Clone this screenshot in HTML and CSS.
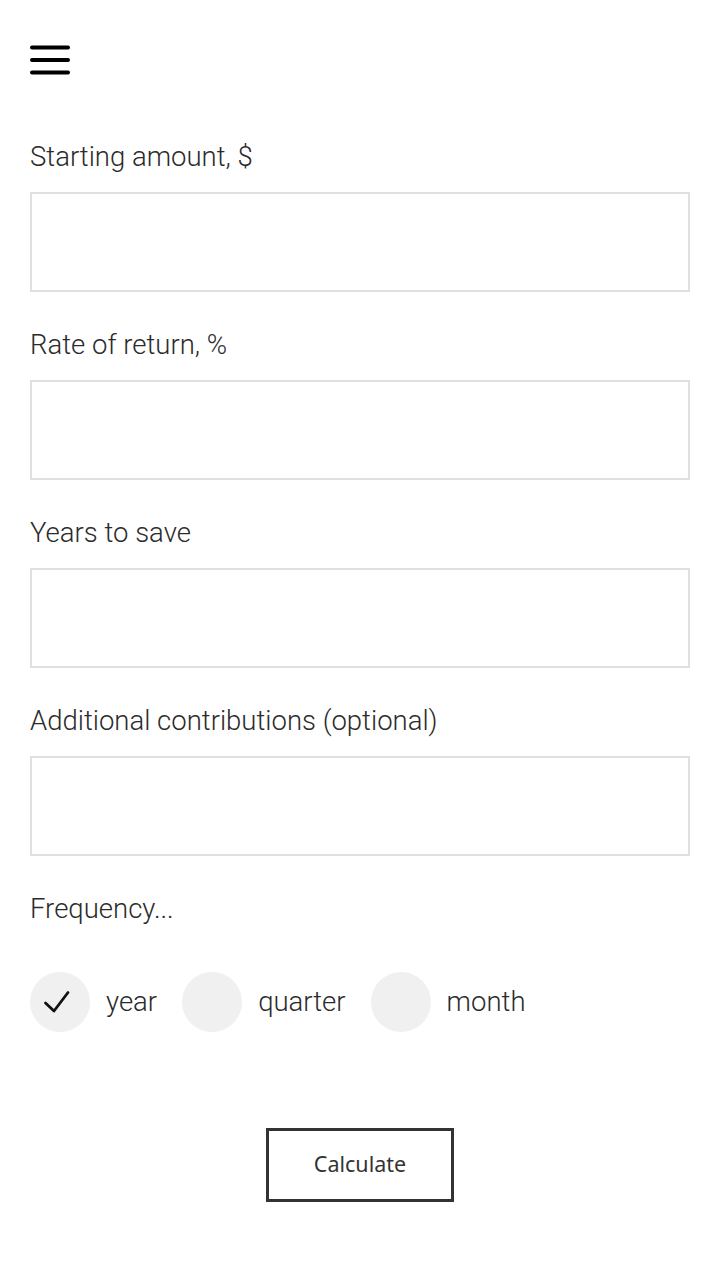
FILE: index.html
```html
<!DOCTYPE html>
<html lang="en">
<head>
<meta charset="utf-8">
<title>Savings calculator</title>
<link rel="stylesheet" href="styles.css">
</head>
<body>
<header class="top">
  <svg class="menu" width="40" height="32" viewBox="0 0 40 32" aria-label="Menu">
    <path d="M2 3.5H38M2 16H38M2 28.5H38" stroke="#000" stroke-width="4" stroke-linecap="round" fill="none"/>
  </svg>
</header>
<main class="form">
  <div class="field">
    <label class="label">Starting amount, $</label>
    <div class="input"></div>
  </div>
  <div class="field">
    <label class="label">Rate of return, %</label>
    <div class="input"></div>
  </div>
  <div class="field">
    <label class="label">Years to save</label>
    <div class="input"></div>
  </div>
  <div class="field">
    <label class="label">Additional contributions (optional)</label>
    <div class="input"></div>
  </div>
  <div class="label freq">Frequency...</div>
  <div class="radios">
    <div class="radio">
      <span class="dot">
        <svg width="60" height="60" viewBox="0 0 60 60"><path d="M15.5 31 L24 39 L38 20.5" stroke="#111" stroke-width="2.8" fill="none" stroke-linecap="round" stroke-linejoin="round"/></svg>
      </span>
      <span class="rlabel">year</span>
    </div>
    <div class="radio">
      <span class="dot"></span>
      <span class="rlabel">quarter</span>
    </div>
    <div class="radio">
      <span class="dot"></span>
      <span class="rlabel">month</span>
    </div>
  </div>
  <div class="actions">
    <button class="btn">Calculate</button>
  </div>
</main>
</body>
</html>
```

FILE: styles.css
```css
html, body {
  margin: 0;
  padding: 0;
  background: #fff;
}
body {
  padding: 0 30px;
  font-family: Roboto, "Liberation Sans", sans-serif;
  font-weight: 300;
  color: #333;
}
.top {
  padding-top: 44px;
  height: 32px;
  margin-bottom: 62px;
}
.menu {
  display: block;
}
.form {
  display: flex;
  flex-direction: column;
}
.field {
  display: flex;
  flex-direction: column;
  margin-bottom: 34px;
}
.label {
  display: block;
  font-size: 27.5px;
  line-height: 38px;
  height: 36px;
  color: #2b2b2b;
}
.input {
  margin-top: 18px;
  height: 96px;
  border: 2px solid #e0e0e0;
}
.freq {
  margin-bottom: 46px;
}
.radios {
  display: flex;
  align-items: center;
  gap: 25px;
}
.radio {
  display: flex;
  align-items: center;
  gap: 16px;
}
.dot {
  width: 60px;
  height: 60px;
  border-radius: 50%;
  background: #f0f0f0;
  display: block;
}
.dot svg {
  display: block;
}
.rlabel {
  font-size: 27.5px;
  line-height: 38px;
  color: #2b2b2b;
}
.actions {
  display: flex;
  justify-content: center;
  margin-top: 96px;
}
.btn {
  width: 188px;
  height: 74px;
  border: 3px solid #333;
  background: #fff;
  font-family: "Noto Sans", "Open Sans", sans-serif;
  font-size: 21.5px;
  font-weight: 400;
  color: #333;
  padding: 0 0 4px;
}
```
